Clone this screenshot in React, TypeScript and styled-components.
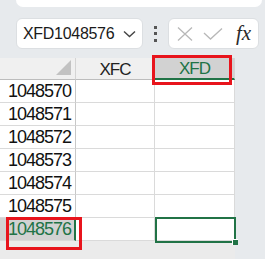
import React from 'react'
import styled, { createGlobalStyle } from 'styled-components'

const GlobalStyle = createGlobalStyle`
  html, body {
    margin: 0;
    padding: 0;
    background: #ffffff;
  }
  #root {
    width: 275px;
    height: 259px;
    overflow: hidden;
  }
`

const green = '#217346'
const red = '#e8141c'

const Page = styled.div`
  width: 265px;
  height: 259px;
  background: #e7eaed;
  display: flex;
  flex-direction: column;
`

const TopPanel = styled.div`
  height: 7px;
  margin: 0 3px 0 16px;
  background: #ffffff;
  border-radius: 0 0 8px 8px;
`

const Toolbar = styled.div`
  display: flex;
  align-items: center;
  height: 31px;
  margin: 11px 0 9px 16px;
`

const NameBox = styled.div`
  box-sizing: border-box;
  width: 127px;
  height: 31px;
  background: #ffffff;
  border: 1px solid #dcdfe2;
  border-radius: 6px;
  display: flex;
  align-items: center;
  justify-content: space-between;
  padding: 0 6px 0 6px;
  font-family: 'Liberation Sans', Arial, sans-serif;
  font-size: 16px;
  letter-spacing: -0.3px;
  color: #1a1a1a;
`

const Dots = styled.div`
  width: 25px;
  display: flex;
  flex-direction: column;
  align-items: center;
  gap: 3.5px;
  span {
    width: 3px;
    height: 3px;
    background: #555555;
  }
`

const FormulaBox = styled.div`
  box-sizing: border-box;
  width: 91px;
  height: 31px;
  background: #ffffff;
  border: 1px solid #dcdfe2;
  border-radius: 6px;
  display: flex;
  align-items: center;
  padding-left: 8px;
  gap: 10px;
`

const Fx = styled.span`
  font-family: 'Liberation Serif', 'Times New Roman', serif;
  font-style: italic;
  font-size: 21px;
  color: #2a2a2a;
  margin-left: 3px;
  line-height: 1;
`

const Sheet = styled.div`
  position: relative;
  width: 235px;
  flex: 1;
  background: #ebebeb;
`

const Grid = styled.div`
  display: grid;
  grid-template-columns: 76px 79px 80px;
  grid-template-rows: 22px repeat(7, 23px);
  background: #ffffff;
  font-family: 'Liberation Sans', Arial, sans-serif;
`

const Corner = styled.div`
  position: relative;
  background: #f0f0f0;
  border-right: 1px solid #d4d4d4;
  border-bottom: 1px solid #bdbdbd;
  &::after {
    content: '';
    position: absolute;
    right: 4px;
    bottom: 4px;
    border-style: solid;
    border-width: 0 0 15px 15px;
    border-color: transparent transparent #c2c2c2 transparent;
  }
`

const ColHead = styled.div<{ $active?: boolean }>`
  display: flex;
  align-items: center;
  justify-content: center;
  background: ${p => (p.$active ? '#d2d2d2' : '#f0f0f0')};
  color: ${p => (p.$active ? green : '#222222')};
  border-right: 1px solid #d4d4d4;
  border-bottom: ${p => (p.$active ? `2px solid ${green}` : '1px solid #bdbdbd')};
  font-size: 17px;
  letter-spacing: -1px;
  padding-top: 2px;
`

const RowHead = styled.div<{ $active?: boolean }>`
  display: flex;
  align-items: center;
  justify-content: flex-end;
  padding-right: ${p => (p.$active ? '3px' : '4px')};
  background: ${p => (p.$active ? '#d2d2d2' : '#ffffff')};
  color: ${p => (p.$active ? green : '#111111')};
  border-right: ${p => (p.$active ? `2px solid ${green}` : '1px solid #c8c8c8')};
  border-bottom: 1px solid #dadada;
  font-size: 18px;
  letter-spacing: -1px;
  padding-top: 1px;
`

const Cell = styled.div`
  border-right: 1px solid #dadada;
  border-bottom: 1px solid #dadada;
`

const RedBox = styled.div`
  position: absolute;
  box-sizing: border-box;
  border: 3px solid ${red};
`

const Selection = styled.div`
  position: absolute;
  box-sizing: border-box;
  left: 155px;
  top: 159px;
  width: 81px;
  height: 26px;
  border: 2px solid ${green};
  &::after {
    content: '';
    position: absolute;
    right: -4px;
    bottom: -4px;
    width: 5px;
    height: 5px;
    background: ${green};
    border-left: 1px solid #ffffff;
    border-top: 1px solid #ffffff;
  }
`

const rows = [1048570, 1048571, 1048572, 1048573, 1048574, 1048575, 1048576]

const App = () => {
  return (
    <>
      <GlobalStyle />
      <Page>
        <TopPanel />
        <Toolbar>
          <NameBox>
            <span>XFD1048576</span>
            <svg width='13' height='8' viewBox='0 0 13 8'>
              <path d='M1 1.5 L6.5 6.5 L12 1.5' fill='none' stroke='#444' strokeWidth='1.4' />
            </svg>
          </NameBox>
          <Dots>
            <span />
            <span />
            <span />
          </Dots>
          <FormulaBox>
            <svg width='16' height='14' viewBox='0 0 16 14'>
              <path d='M1 0.5 L15 13.5 M15 0.5 L1 13.5' stroke='#b8b8b8' strokeWidth='1.3' />
            </svg>
            <svg width='20' height='12' viewBox='0 0 20 12'>
              <path d='M1 5 L7.5 11 L19 0.5' fill='none' stroke='#b8b8b8' strokeWidth='1.3' />
            </svg>
            <Fx>fx</Fx>
          </FormulaBox>
        </Toolbar>
        <Sheet>
          <Grid>
            <Corner />
            <ColHead>XFC</ColHead>
            <ColHead $active>XFD</ColHead>
            {rows.map(r => (
              <React.Fragment key={r}>
                <RowHead $active={r === 1048576}>{r}</RowHead>
                <Cell />
                <Cell />
              </React.Fragment>
            ))}
          </Grid>
          <RedBox style={{ left: 152, top: -3, width: 80, height: 30 }} />
          <RedBox style={{ left: 6, top: 159, width: 76, height: 33 }} />
          <Selection />
        </Sheet>
      </Page>
    </>
  )
}

export default App
